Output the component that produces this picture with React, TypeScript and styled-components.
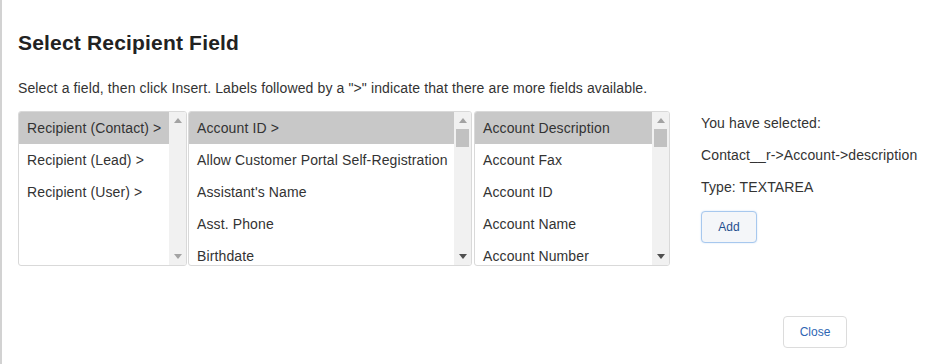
import React from "react";
import styled, { createGlobalStyle } from "styled-components";

const Global = createGlobalStyle`
  html, body { margin: 0; padding: 0; background: #fff; }
  body { font-family: Arial, "Liberation Sans", sans-serif; color: #333; letter-spacing: 0.12px; }
`;

const Dialog = styled.div`
  box-sizing: border-box;
  width: 950px;
  height: 364px;
  border-left: 2px solid #d2d2d2;
  padding: 31px 0 0 16px;
  overflow: hidden;
`;

const Title = styled.h2`
  margin: 0;
  font-size: 21px;
  line-height: 24px;
  font-weight: bold;
  letter-spacing: 0.18px;
  color: #222;
`;

const Desc = styled.p`
  margin: 25px 0 0;
  font-size: 14px;
  line-height: 16px;
  color: #333;
`;

const Row = styled.div`
  display: flex;
  align-items: flex-start;
  margin-top: 15px;
`;

const Lists = styled.div`
  display: flex;
  gap: 1px;
`;

const ListBox = styled.div<{ $w: number; $ml?: number }>`
  box-sizing: border-box;
  width: ${(p) => p.$w}px;
  height: 155px;
  margin-left: ${(p) => p.$ml ?? 0}px;
  border: 1px solid #d9d9d9;
  border-radius: 3px;
  display: flex;
  overflow: hidden;
`;

const Items = styled.div`
  flex: 1;
  overflow: hidden;
`;

const Item = styled.div<{ $sel?: boolean }>`
  height: 32px;
  line-height: 32px;
  padding-left: 8px;
  font-size: 14px;
  color: #333;
  white-space: nowrap;
  background: ${(p) => (p.$sel ? "#c8c8c8" : "transparent")};
`;

const ScrollBar = styled.div`
  width: 17px;
  background: #f1f1f1;
  display: flex;
  flex-direction: column;
`;

const Arrow = styled.div`
  height: 17px;
  display: flex;
  align-items: center;
  justify-content: center;
`;

const Track = styled.div`
  flex: 1;
  display: flex;
  justify-content: center;
`;

const Thumb = styled.div`
  width: 13px;
  height: 18px;
  background: #c1c1c1;
`;

const Side = styled.div`
  margin-left: 31px;
  padding-top: 2px;
  font-size: 14px;
  line-height: 20px;
  color: #333;
`;

const Line = styled.div<{ $mt?: number }>`
  margin-top: ${(p) => p.$mt ?? 0}px;
  white-space: nowrap;
`;

const AddButton = styled.button`
  box-sizing: border-box;
  margin-top: 14px;
  width: 56px;
  height: 32px;
  background: #f4f6f9;
  border: 1px solid #a7c8ee;
  box-shadow: 0 0 2px #cfe1f7;
  border-radius: 4px;
  font-family: Arial, "Liberation Sans", sans-serif;
  font-size: 12px;
  color: #1f4f8f;
  padding: 0;
`;

const Footer = styled.div`
  display: flex;
  justify-content: flex-end;
  padding-right: 103px;
  margin-top: 50px;
`;

const CloseButton = styled.button`
  box-sizing: border-box;
  width: 64px;
  height: 32px;
  background: #fff;
  border: 1px solid #dcdcdc;
  border-radius: 4px;
  font-family: Arial, "Liberation Sans", sans-serif;
  font-size: 12px;
  color: #2f66b3;
  padding: 0;
`;

const Tri = ({ up, dark }: { up?: boolean; dark?: boolean }) => (
  <svg width="8" height="5" viewBox="0 0 8 5">
    <polygon
      points={up ? "0,5 8,5 4,0" : "0,0 8,0 4,5"}
      fill={dark ? "#505050" : "#a3a3a3"}
    />
  </svg>
);

const Scroll = ({ thumb }: { thumb?: boolean }) => (
  <ScrollBar>
    <Arrow>
      <Tri up />
    </Arrow>
    <Track>{thumb && <Thumb />}</Track>
    <Arrow>
      <Tri dark={thumb} />
    </Arrow>
  </ScrollBar>
);

const list1 = ["Recipient (Contact) >", "Recipient (Lead) >", "Recipient (User) >"];
const list2 = [
  "Account ID >",
  "Allow Customer Portal Self-Registration",
  "Assistant's Name",
  "Asst. Phone",
  "Birthdate",
];
const list3 = [
  "Account Description",
  "Account Fax",
  "Account ID",
  "Account Name",
  "Account Number",
];

export default function App() {
  return (
    <>
      <Global />
      <Dialog>
        <Title>Select Recipient Field</Title>
        <Desc>
          Select a field, then click Insert. Labels followed by a "&gt;" indicate that there are more
          fields available.
        </Desc>
        <Row>
          <Lists>
            <ListBox $w={169}>
              <Items>
                {list1.map((t, i) => (
                  <Item key={t} $sel={i === 0}>
                    {t}
                  </Item>
                ))}
              </Items>
              <Scroll />
            </ListBox>
            <ListBox $w={284}>
              <Items>
                {list2.map((t, i) => (
                  <Item key={t} $sel={i === 0}>
                    {t}
                  </Item>
                ))}
              </Items>
              <Scroll thumb />
            </ListBox>
            <ListBox $w={196} $ml={1}>
              <Items>
                {list3.map((t, i) => (
                  <Item key={t} $sel={i === 0}>
                    {t}
                  </Item>
                ))}
              </Items>
              <Scroll thumb />
            </ListBox>
          </Lists>
          <Side>
            <Line>You have selected:</Line>
            <Line $mt={12}>Contact__r-&gt;Account-&gt;description</Line>
            <Line $mt={12}>Type: TEXTAREA</Line>
            <AddButton>Add</AddButton>
          </Side>
        </Row>
        <Footer>
          <CloseButton>Close</CloseButton>
        </Footer>
      </Dialog>
    </>
  );
}
